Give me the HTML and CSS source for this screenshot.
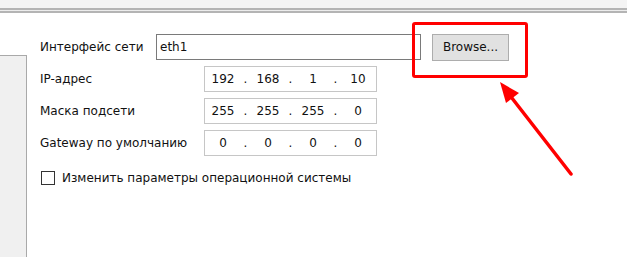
FILE: index.html
```html
<!DOCTYPE html>
<html lang="ru">
  <head>
    <meta charset="UTF-8" />
    <meta name="viewport" content="width=device-width, initial-scale=1.0" />
    <title>Сетевые параметры</title>
    <link rel="stylesheet" href="styles.css">
  </head>
  <body>
    <div class="window">
      <div class="titlebar"></div>
      <div class="rule"></div>
      <div class="content">
        <div class="sidebar"></div>
        <div class="form">
          <div class="row">
            <span class="label label-iface">Интерфейс сети</span>
            <div class="textbox">eth1</div>
            <button class="btn">Browse...</button>
          </div>
          <div class="row">
            <span class="label label-ip">IP-адрес</span>
            <div class="ipbox">
              <span class="seg">192</span><span class="dot">.</span><span class="seg">168</span><span class="dot">.</span><span class="seg">1</span><span class="dot">.</span><span class="seg">10</span>
            </div>
          </div>
          <div class="row">
            <span class="label label-ip">Маска подсети</span>
            <div class="ipbox">
              <span class="seg">255</span><span class="dot">.</span><span class="seg">255</span><span class="dot">.</span><span class="seg">255</span><span class="dot">.</span><span class="seg">0</span>
            </div>
          </div>
          <div class="row">
            <span class="label label-ip">Gateway по умолчанию</span>
            <div class="ipbox">
              <span class="seg">0</span><span class="dot">.</span><span class="seg">0</span><span class="dot">.</span><span class="seg">0</span><span class="dot">.</span><span class="seg">0</span>
            </div>
          </div>
          <div class="check-row">
            <span class="checkbox"></span>
            <span class="check-text">Изменить параметры операционной системы</span>
          </div>
        </div>
      </div>

      <!-- annotation: red frame + arrow -->
      <div class="callout"></div>
      <svg class="arrow" width="627" height="257" viewBox="0 0 627 257">
        <line x1="508" y1="93" x2="571" y2="174" stroke="#ff0000" stroke-width="3.5" stroke-linecap="round" />
        <polygon points="500,82 519,93 506,103" fill="#ff0000" />
      </svg>
    </div>
  </body>
</html>
```

FILE: styles.css
```css
* {
  margin: 0;
  padding: 0;
  box-sizing: border-box;
}
body {
  background-color: white;
  font-family: "DejaVu Sans", sans-serif;
  font-size: 12px;
  color: #111;
}
.window {
  position: relative;
  width: 627px;
  height: 257px;
  overflow: hidden;
  display: flex;
  flex-direction: column;
}
.titlebar {
  height: 8px;
  background-color: #f4f4f4;
}
.rule {
  height: 5px;
  border-top: 2px solid #b4b4b4;
  border-bottom: 2px solid #b4b4b4;
  background-color: #ececec;
}
.content {
  flex: 1;
  display: flex;
}
.sidebar {
  width: 27px;
  margin-top: 42px;
  background-color: #f0f0f0;
  border-top: 1px solid #a9a9a9;
  border-right: 1px solid #a9a9a9;
}
.form {
  display: flex;
  flex-direction: column;
  gap: 6px;
  padding-top: 21px;
  padding-left: 13px;
}
.row {
  display: flex;
  align-items: center;
  height: 26px;
}
.label {
  white-space: nowrap;
}
.label-iface {
  width: 116px;
}
.label-ip {
  width: 164px;
}
.textbox {
  width: 265px;
  height: 26px;
  border: 1px solid #7a7a7a;
  padding-left: 3px;
  display: flex;
  align-items: center;
}
.btn {
  width: 77px;
  height: 27px;
  margin-left: 11px;
  background-color: #e1e1e1;
  border: 1px solid #adadad;
  font-family: inherit;
  font-size: 12px;
  color: #111;
}
.ipbox {
  width: 173px;
  height: 26px;
  border: 1px solid #c6c6c6;
  display: flex;
  align-items: center;
}
.seg {
  width: 36px;
  text-align: center;
}
.dot {
  width: 9px;
  text-align: center;
}
.check-row {
  display: flex;
  align-items: center;
  gap: 7px;
  margin-top: 9px;
  padding-left: 1px;
}
.checkbox {
  width: 14px;
  height: 14px;
  border: 1px solid #333;
  background-color: white;
}

/* annotation overlay */
.callout {
  position: absolute;
  left: 412px;
  top: 22px;
  width: 116px;
  height: 56px;
  border: 3px solid #ff0000;
  border-radius: 3px;
}
.arrow {
  position: absolute;
  left: 0;
  top: 0;
  pointer-events: none;
}
```
